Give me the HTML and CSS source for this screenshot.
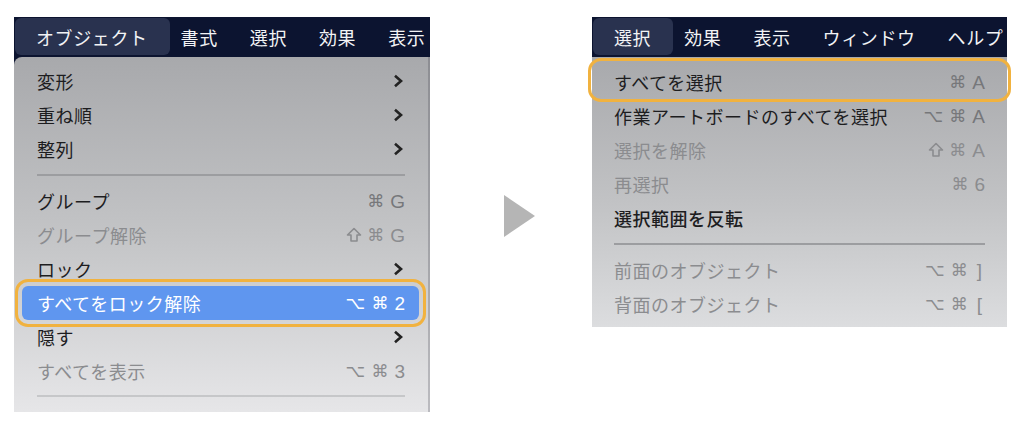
FILE: index.html
```html
<!DOCTYPE html>
<html lang="ja">
<head>
  <meta charset="UTF-8">
  <meta name="viewport" content="width=device-width, initial-scale=1.0">
  <title>メニュー</title>
  <link rel="stylesheet" href="styles.css">
</head>
<body>
  <div class="page">
    <!-- left: object menu -->
    <div class="shot shot-left">
      <div class="menubar">
        <span class="mb-item active">オブジェクト</span>
        <span class="mb-item after-active">書式</span>
        <span class="mb-item">選択</span>
        <span class="mb-item">効果</span>
        <span class="mb-item">表示</span>
      </div>
      <div class="dropdown dropdown-left">
        <div class="row"><span class="label">変形</span><svg class="chev" viewBox="0 0 10 14"><path d="M2 1.8 L8 7 L2 12.2"/></svg></div>
        <div class="row"><span class="label">重ね順</span><svg class="chev" viewBox="0 0 10 14"><path d="M2 1.8 L8 7 L2 12.2"/></svg></div>
        <div class="row"><span class="label">整列</span><svg class="chev" viewBox="0 0 10 14"><path d="M2 1.8 L8 7 L2 12.2"/></svg></div>
        <div class="sep"></div>
        <div class="row"><span class="label">グループ</span><span class="keys"><span class="cmd">⌘</span><span class="ch">G</span></span></div>
        <div class="row off"><span class="label">グループ解除</span><span class="keys"><svg class="shift" viewBox="0 0 16 16"><path d="M8 1.5 L14.5 8 H11 V14 H5 V8 H1.5 Z"/></svg><span class="cmd">⌘</span><span class="ch">G</span></span></div>
        <div class="row"><span class="label">ロック</span><svg class="chev" viewBox="0 0 10 14"><path d="M2 1.8 L8 7 L2 12.2"/></svg></div>
        <div class="row selected"><span class="label">すべてをロック解除</span><span class="keys"><span class="opt">⌥</span><span class="cmd">⌘</span><span class="ch">2</span></span></div>
        <div class="row"><span class="label">隠す</span><svg class="chev" viewBox="0 0 10 14"><path d="M2 1.8 L8 7 L2 12.2"/></svg></div>
        <div class="row off"><span class="label">すべてを表示</span><span class="keys"><span class="opt">⌥</span><span class="cmd">⌘</span><span class="ch">3</span></span></div>
        <div class="sep sep-light"></div>
      </div>
    </div>

    <svg class="arrow" viewBox="0 0 31 42"><polygon points="0,0 31,21 0,42"/></svg>

    <!-- right: select menu -->
    <div class="shot shot-right">
      <div class="menubar">
        <span class="mb-item active">選択</span>
        <span class="mb-item after-active">効果</span>
        <span class="mb-item">表示</span>
        <span class="mb-item">ウィンドウ</span>
        <span class="mb-item">ヘルプ</span>
      </div>
      <div class="dropdown dropdown-right">
        <div class="row ringed"><span class="label">すべてを選択</span><span class="keys"><span class="cmd">⌘</span><span class="ch">A</span></span></div>
        <div class="row"><span class="label">作業アートボードのすべてを選択</span><span class="keys"><span class="opt">⌥</span><span class="cmd">⌘</span><span class="ch">A</span></span></div>
        <div class="row off"><span class="label">選択を解除</span><span class="keys"><svg class="shift" viewBox="0 0 16 16"><path d="M8 1.5 L14.5 8 H11 V14 H5 V8 H1.5 Z"/></svg><span class="cmd">⌘</span><span class="ch">A</span></span></div>
        <div class="row off"><span class="label">再選択</span><span class="keys"><span class="cmd">⌘</span><span class="ch">6</span></span></div>
        <div class="row"><span class="label strong">選択範囲を反転</span></div>
        <div class="sep"></div>
        <div class="row off"><span class="label">前面のオブジェクト</span><span class="keys"><span class="opt">⌥</span><span class="cmd">⌘</span><span class="ch br">]</span></span></div>
        <div class="row off"><span class="label">背面のオブジェクト</span><span class="keys"><span class="opt">⌥</span><span class="cmd">⌘</span><span class="ch br">[</span></span></div>
      </div>
    </div>
  </div>
</body>
</html>
```

FILE: styles.css
```css
body{
  margin:0;
  background:#fff;
  font-family:"Noto Sans CJK JP", sans-serif;
}
.page{
  display:flex;
  align-items:flex-start;
  padding-top:17px;
}
.shot-left{
  margin-left:14px;
  width:416px;
  background:#0c1430;
}
.shot-right{
  margin-left:57px;
  width:415px;
}
.arrow{
  width:31px;
  height:42px;
  margin-top:178px;
  margin-left:74px;
  fill:#b5b5b5;
}

/* top menu bar */
.menubar{
  display:flex;
  height:40px;
  background:#0c1430;
  color:#f2f3f5;
  font-size:18px;
  letter-spacing:0.6px;
  white-space:nowrap;
  overflow:hidden;
}
.mb-item{
  display:flex;
  align-items:center;
  padding:0 16px;
  line-height:1;
}
.mb-item.active{
  margin:1px 0 2px 1px;
  padding:0 22px 0 21px;
  background:#29324f;
  border-radius:6px;
}
.mb-item.after-active{
  margin-left:-5px;
}

/* dropdown */
.dropdown{
  position:relative;
  font-size:18px;
  letter-spacing:0.5px;
  color:#1d1d1f;
}
.dropdown-left{
  height:355px;
  box-sizing:border-box;
  padding-top:7px;
  border-right:2px solid rgba(60,60,70,0.25);
  border-top-left-radius:8px;
  background:linear-gradient(180deg,#a8a9ac 0%,#c3c4c6 50%,#e6e6e8 100%);
}
.dropdown-right{
  height:270px;
  box-sizing:border-box;
  padding-top:4px;
  background:linear-gradient(180deg,#a8a9ac 0%,#c2c3c5 55%,#dcdddf 100%);
}
.row{
  display:flex;
  align-items:center;
  justify-content:space-between;
  height:34px;
  margin:0 9px 0 8px;
  padding:0 14px 0 15px;
  white-space:nowrap;
}
.dropdown-right .row{
  margin:0;
  padding:0 22px 0 22px;
}
.label{
  line-height:1;
}
.label.strong{
  font-weight:500;
}

/* shortcut keys */
.keys{
  display:flex;
  align-items:center;
  gap:5px;
  color:#76777a;
  letter-spacing:0;
  line-height:1;
}
.keys .cmd{
  font-family:"DejaVu Sans",sans-serif;
  font-size:17px;
}
.keys .opt{
  font-family:"DejaVu Sans",sans-serif;
  font-size:17px;
  margin-right:1px;
}
.keys .ch{
  font-family:"Liberation Sans",sans-serif;
  font-size:19px;
  margin-left:1px;
}
.keys .br{
  margin-left:4px;
  margin-right:3px;
}
.shift{
  width:16px;
  height:16px;
  fill:none;
  stroke:currentColor;
  stroke-width:1.6;
  stroke-linejoin:round;
}
.row.off .label,
.row.off .keys{
  color:#8b8c8f;
}
.chev{
  width:10px;
  height:14px;
  margin-right:2px;
  fill:none;
  stroke:#222;
  stroke-width:2.6;
}
.row.selected{
  background:#5f96ef;
  border-radius:6px;
  color:#fff;
  outline:3px solid #f1b23f;
  outline-offset:4px;
}
.row.selected .keys{
  color:#fff;
}
.dropdown-right .row.ringed{
  height:38px;
  box-sizing:border-box;
  padding-top:4px;
  margin:0 -1px;
  padding-left:23px;
  padding-right:23px;
  border-radius:10px;
  outline:3px solid #f1b23f;
  outline-offset:0;
}
.sep{
  height:18px;
  display:flex;
  align-items:center;
  margin:0 23px 0 23px;
}
.sep::before{
  content:"";
  flex:1;
  height:2px;
  background:#9c9da0;
}
.sep-light{
  height:16px;
}
.sep-light::before{
  background:#c6c7c9;
}
.dropdown-right .sep{
  margin:0 22px;
}
```
